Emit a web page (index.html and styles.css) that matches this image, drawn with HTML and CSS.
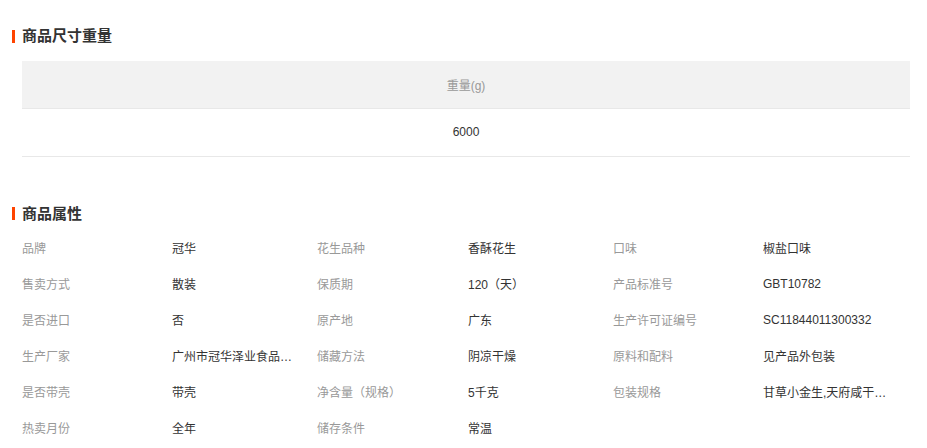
FILE: index.html
```html
<!DOCTYPE html>
<html lang="zh-CN">
<head>
<meta charset="utf-8">
<link rel="stylesheet" href="styles.css">
</head>
<body>
<div class="page">
  <h2 class="title">商品尺寸重量</h2>
  <table class="size-table">
    <thead><tr><th>重量(g)</th></tr></thead>
    <tbody><tr><td>6000</td></tr></tbody>
  </table>

  <h2 class="title title-attr">商品属性</h2>
  <div class="attrs">
    <div class="k">品牌</div><div class="v">冠华</div>
    <div class="k">花生品种</div><div class="v">香酥花生</div>
    <div class="k">口味</div><div class="v">椒盐口味</div>

    <div class="k">售卖方式</div><div class="v">散装</div>
    <div class="k">保质期</div><div class="v">120（天）</div>
    <div class="k">产品标准号</div><div class="v">GBT10782</div>

    <div class="k">是否进口</div><div class="v">否</div>
    <div class="k">原产地</div><div class="v">广东</div>
    <div class="k">生产许可证编号</div><div class="v">SC11844011300332</div>

    <div class="k">生产厂家</div><div class="v">广州市冠华泽业食品有限公司</div>
    <div class="k">储藏方法</div><div class="v">阴凉干燥</div>
    <div class="k">原料和配料</div><div class="v">见产品外包装</div>

    <div class="k">是否带壳</div><div class="v">带壳</div>
    <div class="k">净含量（规格）</div><div class="v">5千克</div>
    <div class="k">包装规格</div><div class="v">甘草小金生,天府咸干花生,椒盐花生</div>

    <div class="k">热卖月份</div><div class="v">全年</div>
    <div class="k">储存条件</div><div class="v">常温</div>
  </div>
</div>
</body>
</html>
```
FILE: styles.css
```css
* { box-sizing: border-box; }
html, body { margin: 0; padding: 0; background: #fff; }
body {
  font-family: "Liberation Sans", "Noto Sans CJK SC", sans-serif;
  font-size: 12px;
  color: #333;
}
.page {
  padding: 28px 17px 0 12px;
}
.title {
  margin: 0;
  height: 16px;
  line-height: 16px;
  font-size: 15px;
  font-weight: bold;
  color: #333;
  display: flex;
  align-items: center;
  gap: 7px;
}
.title::before {
  content: "";
  width: 3px;
  height: 13px;
  background: #ff4400;
  flex: none;
}
.size-table {
  margin: 17px 0 0 10px;
  width: 888px;
  border-collapse: collapse;
}
.size-table th,
.size-table td {
  height: 48px;
  padding: 0;
  text-align: center;
  font-weight: normal;
  border-bottom: 1px solid #e8e8e8;
}
.size-table th {
  height: 47px;
  background: #f2f2f2;
  color: #999;
}
.size-table td { color: #333; }
.title-attr { margin-top: 49px; }
.attrs {
  margin: 8px 0 0 10px;
  display: grid;
  grid-template-columns: 150px 145px 151px 145px 150px 150px;
  grid-auto-rows: 36px;
  align-items: center;
}
.k { color: #999; white-space: nowrap; }
.v {
  color: #333;
  max-width: 125px;
  white-space: nowrap;
  overflow: hidden;
  text-overflow: ellipsis;
}
```
